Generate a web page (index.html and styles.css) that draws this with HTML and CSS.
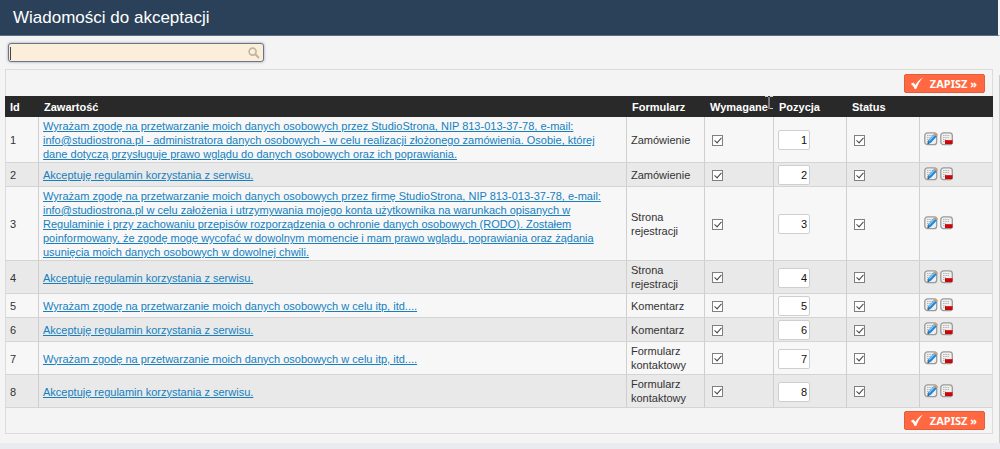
FILE: index.html
```
<!DOCTYPE html>
<html lang="pl">
<head>
    <meta charset="UTF-8">
    <meta name="viewport" content="width=device-width, initial-scale=1.0">
    <title>Wiadomości do akceptacji</title>
    <link rel="stylesheet" href="styles.css">
</head>
<body>
    <svg class="symbols" aria-hidden="true">
        <symbol id="icon-edit" viewBox="0 0 14 14">
            <rect x=".8" y=".8" width="11.9" height="11.9" rx="2.800" fill="#f0f0f0" stroke="#9a9a9a" stroke-width="1.300"/>
            <path d="M3 3.500h6M3 5.500h5M3 7.500h3M3 9.500h2" stroke="#b4b4b4" stroke-width="1" stroke-dasharray="1.500 .8"/>
            <path d="M3.500 12l.6-3.600L10.200 1.800l2.800 2.500-6.300 6.700z" fill="#2288d8"/>
            <path d="M5.200 8.600l5.600-5.900" stroke="#8fd0f5" stroke-width="1.200"/>
            <path d="M10.100 2.300l1.600-1.700 2.300 2.200-1.500 1.800z" fill="#d99a63"/>
            <path d="M3.500 12l.4-1.900 1.600 1.300z" fill="#444"/>
        </symbol>
        <symbol id="icon-delete" viewBox="0 0 14 14">
            <rect x=".8" y=".8" width="11.500" height="11.900" rx="2.800" fill="#f0f0f0" stroke="#9a9a9a" stroke-width="1.300"/>
            <path d="M3 3.500h7M3 5.500h6M3 7.500h3M3 9.500h2" stroke="#b4b4b4" stroke-width="1" stroke-dasharray="1.500 .8"/>
            <rect x="5" y="8" width="7.500" height="4" fill="#c8060c"/>
            <path d="M5.500 8.600h6.500" stroke="#e84a4a" stroke-width=".6"/>
        </symbol>
        <symbol id="icon-check" viewBox="0 0 14 13">
            <path d="M.8 6.900l2.700-1.500 2 2.500C7.200 5 9.500 2.400 13.200.6c-3.100 3-5.200 6.600-6.800 11.200l-1.700.2C3.800 9.600 2.500 8.100.8 6.900z" fill="#fff"/>
        </symbol>
    </svg>

    <header class="page-title">
        <h1>Wiadomości do akceptacji</h1>
    </header>

    <main class="content">
        <div class="search">
            <input type="text" id="szukaj" class="search-input" aria-label="Szukaj">
            <span class="caret"></span>
            <svg class="search-icon" viewBox="0 0 12 12"><circle cx="4.600" cy="4.600" r="3.500" fill="none" stroke="#bfb5a0" stroke-width="1.600"/><path d="M7.300 7.300l3.700 3.700" stroke="#bfb5a0" stroke-width="2"/></svg>
        </div>

        <form onsubmit="return false">
            <div class="toolbar">
                <button type="submit" class="save"><svg><use href="#icon-check"/></svg>ZAPISZ »</button>
            </div>
            <table class="messages">
                <colgroup>
                    <col class="col-id">
                    <col>
                    <col class="col-form">
                    <col class="col-required">
                    <col class="col-side">
                    <col class="col-side">
                    <col class="col-side">
                </colgroup>
                <thead>
                    <tr>
                        <th>Id</th>
                        <th>Zawartość</th>
                        <th>Formularz</th>
                        <th class="required">Wymagane<svg class="cursor" viewBox="0 0 8 14"><path d="M0 .5h3M5 .5h3M4 1v12M5 12.500h3" stroke="#ccc" fill="none"/></svg></th>
                        <th>Pozycja</th>
                        <th>Status</th>
                        <th></th>
                    </tr>
                </thead>
                <tbody>
                    <tr>
                        <td>1</td>
                        <td><a href="#">Wyrażam zgodę na przetwarzanie moich danych osobowych przez StudioStrona, NIP 813-013-37-78, e-mail: info@studiostrona.pl - administratora danych osobowych - w celu realizacji złożonego zamówienia. Osobie, której dane dotyczą przysługuje prawo wglądu do danych osobowych oraz ich poprawiania.</a></td>
                        <td class="form-name">Zamówienie</td>
                        <td class="tick"><input type="checkbox" aria-label="Wymagane 1" checked></td>
                        <td><input type="text" class="position" aria-label="Pozycja 1" value="1"></td>
                        <td class="tick"><input type="checkbox" aria-label="Status 1" checked></td>
                        <td><div class="actions"><a href="#" aria-label="Edytuj"><svg><use href="#icon-edit"/></svg></a><a href="#" aria-label="Usuń"><svg><use href="#icon-delete"/></svg></a></div></td>
                    </tr>
                    <tr>
                        <td>2</td>
                        <td><a href="#">Akceptuję regulamin korzystania z serwisu.</a></td>
                        <td class="form-name">Zamówienie</td>
                        <td class="tick"><input type="checkbox" aria-label="Wymagane 2" checked></td>
                        <td><input type="text" class="position" aria-label="Pozycja 2" value="2"></td>
                        <td class="tick"><input type="checkbox" aria-label="Status 2" checked></td>
                        <td><div class="actions"><a href="#" aria-label="Edytuj"><svg><use href="#icon-edit"/></svg></a><a href="#" aria-label="Usuń"><svg><use href="#icon-delete"/></svg></a></div></td>
                    </tr>
                    <tr>
                        <td>3</td>
                        <td><a href="#">Wyrażam zgodę na przetwarzanie moich danych osobowych przez firmę StudioStrona, NIP 813-013-37-78, e-mail: info@studiostrona.pl w celu założenia i utrzymywania mojego konta użytkownika na warunkach opisanych w Regulaminie i przy zachowaniu przepisów rozporządzenia o ochronie danych osobowych (RODO). Zostałem poinformowany, że zgodę mogę wycofać w dowolnym momencie i mam prawo wglądu, poprawiania oraz żądania usunięcia moich danych osobowych w dowolnej chwili.</a></td>
                        <td class="form-name">Strona rejestracji</td>
                        <td class="tick"><input type="checkbox" aria-label="Wymagane 3" checked></td>
                        <td><input type="text" class="position" aria-label="Pozycja 3" value="3"></td>
                        <td class="tick"><input type="checkbox" aria-label="Status 3" checked></td>
                        <td><div class="actions"><a href="#" aria-label="Edytuj"><svg><use href="#icon-edit"/></svg></a><a href="#" aria-label="Usuń"><svg><use href="#icon-delete"/></svg></a></div></td>
                    </tr>
                    <tr>
                        <td>4</td>
                        <td><a href="#">Akceptuję regulamin korzystania z serwisu.</a></td>
                        <td class="form-name">Strona rejestracji</td>
                        <td class="tick"><input type="checkbox" aria-label="Wymagane 4" checked></td>
                        <td><input type="text" class="position" aria-label="Pozycja 4" value="4"></td>
                        <td class="tick"><input type="checkbox" aria-label="Status 4" checked></td>
                        <td><div class="actions"><a href="#" aria-label="Edytuj"><svg><use href="#icon-edit"/></svg></a><a href="#" aria-label="Usuń"><svg><use href="#icon-delete"/></svg></a></div></td>
                    </tr>
                    <tr>
                        <td>5</td>
                        <td><a href="#">Wyrażam zgodę na przetwarzanie moich danych osobowych w celu itp, itd....</a></td>
                        <td class="form-name">Komentarz</td>
                        <td class="tick"><input type="checkbox" aria-label="Wymagane 5" checked></td>
                        <td><input type="text" class="position" aria-label="Pozycja 5" value="5"></td>
                        <td class="tick"><input type="checkbox" aria-label="Status 5" checked></td>
                        <td><div class="actions"><a href="#" aria-label="Edytuj"><svg><use href="#icon-edit"/></svg></a><a href="#" aria-label="Usuń"><svg><use href="#icon-delete"/></svg></a></div></td>
                    </tr>
                    <tr>
                        <td>6</td>
                        <td><a href="#">Akceptuję regulamin korzystania z serwisu.</a></td>
                        <td class="form-name">Komentarz</td>
                        <td class="tick"><input type="checkbox" aria-label="Wymagane 6" checked></td>
                        <td><input type="text" class="position" aria-label="Pozycja 6" value="6"></td>
                        <td class="tick"><input type="checkbox" aria-label="Status 6" checked></td>
                        <td><div class="actions"><a href="#" aria-label="Edytuj"><svg><use href="#icon-edit"/></svg></a><a href="#" aria-label="Usuń"><svg><use href="#icon-delete"/></svg></a></div></td>
                    </tr>
                    <tr>
                        <td>7</td>
                        <td><a href="#">Wyrażam zgodę na przetwarzanie moich danych osobowych w celu itp, itd....</a></td>
                        <td class="form-name">Formularz kontaktowy</td>
                        <td class="tick"><input type="checkbox" aria-label="Wymagane 7" checked></td>
                        <td><input type="text" class="position" aria-label="Pozycja 7" value="7"></td>
                        <td class="tick"><input type="checkbox" aria-label="Status 7" checked></td>
                        <td><div class="actions"><a href="#" aria-label="Edytuj"><svg><use href="#icon-edit"/></svg></a><a href="#" aria-label="Usuń"><svg><use href="#icon-delete"/></svg></a></div></td>
                    </tr>
                    <tr>
                        <td>8</td>
                        <td><a href="#">Akceptuję regulamin korzystania z serwisu.</a></td>
                        <td class="form-name">Formularz kontaktowy</td>
                        <td class="tick"><input type="checkbox" aria-label="Wymagane 8" checked></td>
                        <td><input type="text" class="position" aria-label="Pozycja 8" value="8"></td>
                        <td class="tick"><input type="checkbox" aria-label="Status 8" checked></td>
                        <td><div class="actions"><a href="#" aria-label="Edytuj"><svg><use href="#icon-edit"/></svg></a><a href="#" aria-label="Usuń"><svg><use href="#icon-delete"/></svg></a></div></td>
                    </tr>
                </tbody>
            </table>
            <div class="toolbar toolbar-bottom">
                <button type="submit" class="save"><svg><use href="#icon-check"/></svg>ZAPISZ »</button>
            </div>
        </form>
    </main>
</body>
</html>
```

FILE: styles.css
```
* {
    box-sizing: border-box;
}
body {
    font-family: "Liberation Sans", Arial, sans-serif;
    font-size: 11px;
    line-height: 14px;
    margin: 0;
    background-color: #eaebf0;
    color: #333;
}
.symbols {
    display: none;
}
.page-title {
    background-color: #2a4159;
    border-bottom: 1px solid #5d6e80;
    border-right: 2px solid #f4f4f4;
    padding: 8px 13px 7px;
}
.page-title h1 {
    color: #fff;
    font-size: 17px;
    font-weight: normal;
    line-height: 20px;
    margin: 0;
}
.content {
    position: relative;
    background-color: #f4f4f4;
    padding: 7px 7px 9px 5px;
}
/* scrollbar thumb */
.content::after {
    content: "";
    position: absolute;
    top: 39px;
    right: 0;
    bottom: 0;
    width: 1px;
    background-color: #cdcdcd;
}
.search {
    position: relative;
    width: 256px;
    margin: 0 0 7px 3px;
}
.search-input {
    display: block;
    width: 100%;
    height: 19px;
    padding: 0 20px 0 4px;
    border: 1px solid #6f7480;
    border-radius: 3px;
    background-color: #fcefd9;
    box-shadow: 0 0 3px #8c9cc8;
    font: inherit;
}
.caret {
    position: absolute;
    left: 2px;
    top: 4px;
    width: 1px;
    height: 13px;
    background-color: #444;
}
.search-icon {
    position: absolute;
    right: 4px;
    top: 4px;
    width: 12px;
    height: 12px;
}
.toolbar {
    display: flex;
    justify-content: flex-end;
    padding: 4px 7px 3px;
    border: 1px solid #dcdcdc;
    border-bottom: none;
}
.toolbar-bottom {
    padding-top: 3px;
    border-top: none;
    border-bottom: 1px solid #dcdcdc;
}
.save {
    display: flex;
    align-items: center;
    gap: 6px;
    height: 19px;
    padding: 0 7px 0 5px;
    border: 1px solid #e0603e;
    border-radius: 2px;
    background-color: #ff6840;
    color: #fff;
    font-family: "Noto Sans", sans-serif;
    font-size: 11px;
    font-weight: bold;
    cursor: pointer;
}
.save svg {
    width: 14px;
    height: 13px;
}
.messages {
    width: 100%;
    table-layout: fixed;
    border-collapse: separate;
    border-spacing: 0;
}
.col-id {
    width: 34px;
}
.col-form {
    width: 78px;
}
.col-required {
    width: 69px;
}
.col-side {
    width: 73px;
}
th {
    background-color: #292929;
    color: #fff;
    font-weight: bold;
    text-align: left;
    padding: 4px 4px 3px 5px;
}
.required {
    position: relative;
}
.cursor {
    position: absolute;
    right: 1px;
    top: 0;
    width: 8px;
    height: 14px;
}
td {
    padding: 2px 4px 1px;
    border-right: 1px solid #cfcfcf;
    border-bottom: 1px solid #d4d4d4;
    background-color: #f7f7f7;
    vertical-align: middle;
}
td:first-child {
    border-left: 1px solid #dcdcdc;
}
td:last-child {
    border-right-color: #dcdcdc;
}
.form-name {
    padding: 2px 4px;
}
tr:nth-child(even) td {
    background-color: #e9e9e9;
}
a {
    color: #1580c0;
}
.tick {
    padding-left: 7px;
}
input[type="checkbox"] {
    appearance: none;
    display: block;
    width: 11px;
    height: 11px;
    margin: 0;
    border: 1px solid #808080;
    background: #fff;
}
input[type="checkbox"]:checked::before {
    content: "";
    display: block;
    width: 3px;
    height: 6px;
    margin: 0 0 0 3px;
    border: solid #444;
    border-width: 0 1px 1px 0;
    transform: rotate(42deg);
}
.position {
    display: block;
    width: 32px;
    height: 20px;
    padding: 0 2px;
    border: 1px solid #cfcfcf;
    border-radius: 2px;
    background-color: #fff;
    color: #111;
    font: inherit;
    text-align: right;
}
.actions {
    display: flex;
    gap: 2px;
    padding-bottom: 2px;
}
.actions svg {
    display: block;
    width: 14px;
    height: 14px;
}
```
